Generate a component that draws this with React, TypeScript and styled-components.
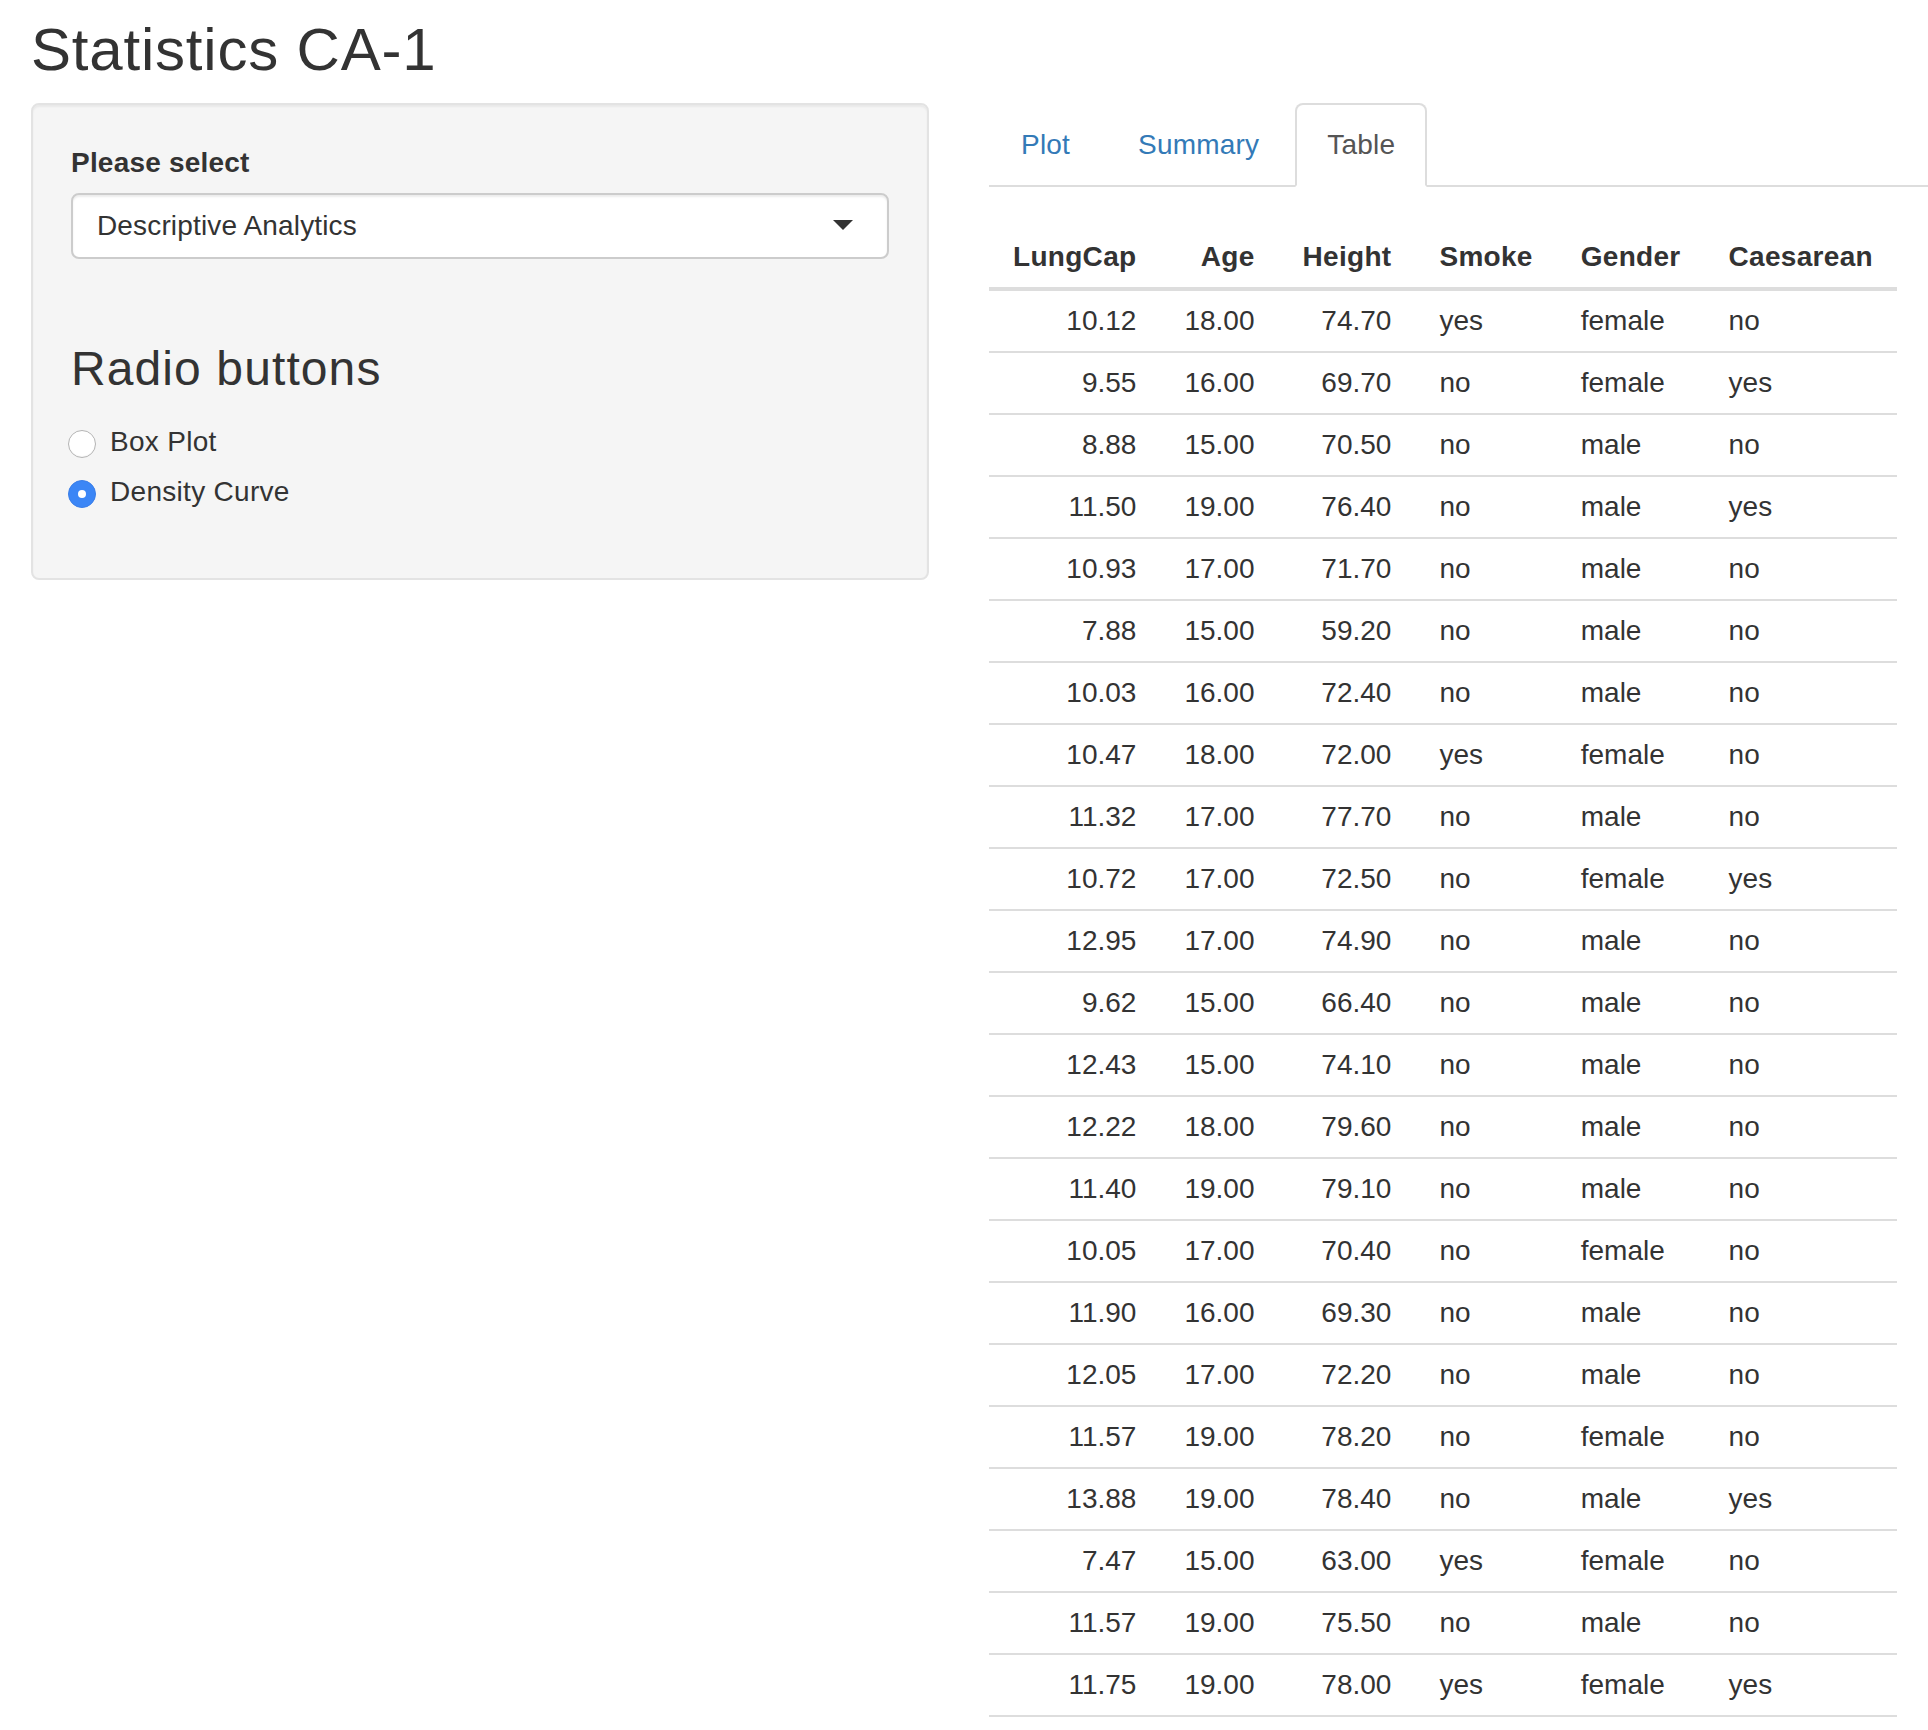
import React from "react";
import styled, { createGlobalStyle, css } from "styled-components";

const GlobalStyle = createGlobalStyle`
  * { box-sizing: border-box; }
  html, body {
    margin: 0;
    padding: 0;
    overflow: hidden;
    background: #fff;
  }
  body {
    font-family: "Liberation Sans", Arial, Helvetica, sans-serif;
    font-size: 28px;
    line-height: 40px;
    color: #333;
  }
`;

const Page = styled.div`
  padding: 0 0 0 31px;
`;

const Title = styled.h2`
  margin: 17px 0 20px;
  font-size: 60px;
  line-height: 66px;
  font-weight: 500;
  letter-spacing: 0.8px;
  color: #333;
`;

const Row = styled.div`
  display: flex;
  align-items: flex-start;
`;

const Well = styled.div`
  flex: 0 0 898px;
  width: 898px;
  padding: 38px;
  background: #f5f5f5;
  border: 2px solid #e3e3e3;
  border-radius: 8px;
  box-shadow: inset 0 2px 2px rgba(0, 0, 0, 0.05);
`;

const FormGroup = styled.div`
  margin-bottom: 83px;
`;

const Label = styled.label`
  display: inline-block;
  margin-bottom: 10px;
  font-weight: 700;
  letter-spacing: 0.2px;
`;

const Select = styled.div`
  display: flex;
  align-items: center;
  justify-content: space-between;
  height: 66px;
  padding: 0 34px 0 24px;
  background: #fff;
  border: 2px solid #ccc;
  border-radius: 8px;
  box-shadow: inset 0 2px 2px rgba(0, 0, 0, 0.075);
  color: #333;
  letter-spacing: 0.15px;
`;

const Caret = styled.span`
  width: 0;
  height: 0;
  margin-top: -2px;
  border-left: 10px solid transparent;
  border-right: 10px solid transparent;
  border-top: 10px solid #333;
`;

const RadioHeading = styled.h3`
  margin: 0;
  font-size: 48px;
  line-height: 53px;
  font-weight: 500;
  letter-spacing: 1.1px;
  color: #333;
`;

const RadioList = styled.div`
  display: flex;
  flex-direction: column;
  gap: 10px;
  margin: 27px 0 28px;
`;

const RadioLabel = styled.label`
  display: flex;
  align-items: center;
  height: 40px;
  letter-spacing: 0.3px;
  cursor: pointer;
`;

const RadioCircle = styled.span<{ $checked?: boolean }>`
  position: relative;
  flex: 0 0 28px;
  width: 28px;
  height: 28px;
  margin: 4px 14px 0 -3px;
  border-radius: 50%;
  ${(p) =>
    p.$checked
      ? css`
          background: #3b86f6;
          border: 1px solid #3a7ee8;
          &::after {
            content: "";
            position: absolute;
            left: 50%;
            top: 50%;
            width: 8px;
            height: 8px;
            margin: -4px 0 0 -4px;
            border-radius: 50%;
            background: #fff;
          }
        `
      : css`
          background: #fff;
          border: 1.5px solid #b4b4b4;
          box-shadow: inset 0 -1px 1px rgba(0, 0, 0, 0.04);
        `}
`;

const Main = styled.div`
  flex: 1;
  min-width: 0;
  margin-left: 60px;
`;

const Tabs = styled.ul`
  display: flex;
  margin: 0;
  padding: 0;
  list-style: none;
  border-bottom: 2px solid #ddd;
`;

const TabItem = styled.li`
  margin: 0 4px -2px 0;
`;

const TabLink = styled.a<{ $active?: boolean }>`
  display: block;
  padding: 20px 30px;
  line-height: 40px;
  border: 2px solid transparent;
  border-radius: 8px 8px 0 0;
  color: #337ab7;
  text-decoration: none;
  letter-spacing: 0.2px;
  cursor: pointer;
  ${(p) =>
    p.$active &&
    css`
      color: #555;
      background: #fff;
      border-color: #ddd #ddd transparent;
    `}
`;

const DataTable = styled.table`
  margin-top: 40px;
  border-collapse: collapse;
  border-spacing: 0;
  width: auto;
`;

const HeadCell = styled.th<{ $align: "left" | "right" }>`
  padding: 10px 24px;
  line-height: 40px;
  font-weight: 700;
  letter-spacing: 0.3px;
  text-align: ${(p) => p.$align};
  border-bottom: 4px solid #ddd;
  white-space: nowrap;
`;

const BodyRow = styled.tr`
  &:last-child td {
    border-bottom: 2px solid #ddd;
  }
`;

const Cell = styled.td<{ $align: "left" | "right" }>`
  padding: 10px 24px;
  line-height: 40px;
  text-align: ${(p) => p.$align};
  border-top: 2px solid #ddd;
  white-space: nowrap;
`;

type Col = { key: string; align: "left" | "right" };

const columns: Col[] = [
  { key: "LungCap", align: "right" },
  { key: "Age", align: "right" },
  { key: "Height", align: "right" },
  { key: "Smoke", align: "left" },
  { key: "Gender", align: "left" },
  { key: "Caesarean", align: "left" },
];

const rows: string[][] = [
  ["10.12", "18.00", "74.70", "yes", "female", "no"],
  ["9.55", "16.00", "69.70", "no", "female", "yes"],
  ["8.88", "15.00", "70.50", "no", "male", "no"],
  ["11.50", "19.00", "76.40", "no", "male", "yes"],
  ["10.93", "17.00", "71.70", "no", "male", "no"],
  ["7.88", "15.00", "59.20", "no", "male", "no"],
  ["10.03", "16.00", "72.40", "no", "male", "no"],
  ["10.47", "18.00", "72.00", "yes", "female", "no"],
  ["11.32", "17.00", "77.70", "no", "male", "no"],
  ["10.72", "17.00", "72.50", "no", "female", "yes"],
  ["12.95", "17.00", "74.90", "no", "male", "no"],
  ["9.62", "15.00", "66.40", "no", "male", "no"],
  ["12.43", "15.00", "74.10", "no", "male", "no"],
  ["12.22", "18.00", "79.60", "no", "male", "no"],
  ["11.40", "19.00", "79.10", "no", "male", "no"],
  ["10.05", "17.00", "70.40", "no", "female", "no"],
  ["11.90", "16.00", "69.30", "no", "male", "no"],
  ["12.05", "17.00", "72.20", "no", "male", "no"],
  ["11.57", "19.00", "78.20", "no", "female", "no"],
  ["13.88", "19.00", "78.40", "no", "male", "yes"],
  ["7.47", "15.00", "63.00", "yes", "female", "no"],
  ["11.57", "19.00", "75.50", "no", "male", "no"],
  ["11.75", "19.00", "78.00", "yes", "female", "yes"],
];

const tabs = ["Plot", "Summary", "Table"];

export default function App() {
  const [choice, setChoice] = React.useState("Density Curve");
  const [tab, setTab] = React.useState("Table");

  return (
    <>
      <GlobalStyle />
      <Page>
        <Title>Statistics CA-1</Title>
        <Row>
          <Well>
            <FormGroup>
              <Label>Please select</Label>
              <Select>
                <span>Descriptive Analytics</span>
                <Caret />
              </Select>
            </FormGroup>
            <RadioHeading>Radio buttons</RadioHeading>
            <RadioList>
              {["Box Plot", "Density Curve"].map((opt) => (
                <RadioLabel key={opt} onClick={() => setChoice(opt)}>
                  <RadioCircle $checked={choice === opt} />
                  <span>{opt}</span>
                </RadioLabel>
              ))}
            </RadioList>
          </Well>
          <Main>
            <Tabs>
              {tabs.map((t) => (
                <TabItem key={t}>
                  <TabLink $active={tab === t} onClick={() => setTab(t)}>
                    {t}
                  </TabLink>
                </TabItem>
              ))}
            </Tabs>
            <DataTable>
              <thead>
                <tr>
                  {columns.map((c) => (
                    <HeadCell key={c.key} $align={c.align}>
                      {c.key}
                    </HeadCell>
                  ))}
                </tr>
              </thead>
              <tbody>
                {rows.map((r, i) => (
                  <BodyRow key={i}>
                    {r.map((v, j) => (
                      <Cell key={j} $align={columns[j].align}>
                        {v}
                      </Cell>
                    ))}
                  </BodyRow>
                ))}
              </tbody>
            </DataTable>
          </Main>
        </Row>
      </Page>
    </>
  );
}
